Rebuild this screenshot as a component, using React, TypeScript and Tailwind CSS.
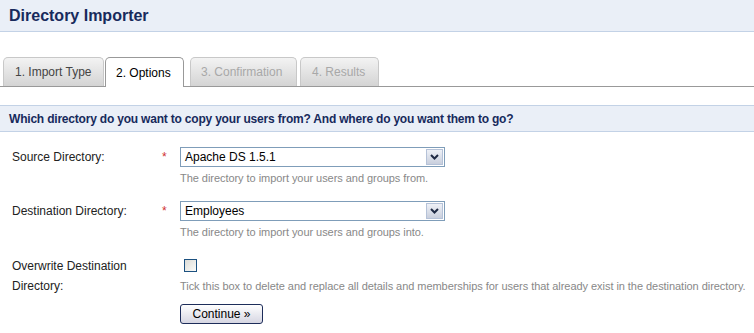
import React from "react";

const font = { fontFamily: '"Liberation Sans", Arial, sans-serif' };

function Chevron() {
  return (
    <svg width="9" height="6" viewBox="0 0 9 6">
      <path d="M1 1 L4.5 4.5 L8 1" stroke="#1f2a44" strokeWidth="2" fill="none" />
    </svg>
  );
}

function Select({ value }: { value: string }) {
  return (
    <div className="flex h-[20px] w-[265px] items-center border border-[#7f9db9] bg-white">
      <span className="flex-1 pl-[4px] text-[12px] leading-[18px] text-black">{value}</span>
      <div className="mr-[1px] flex h-[16px] w-[17px] items-center justify-center border border-[#b5c2d8] bg-gradient-to-b from-[#eef1f7] to-[#c9cfdd]">
        <Chevron />
      </div>
    </div>
  );
}

function Tab({
  label,
  className,
  state,
}: {
  label: string;
  className: string;
  state: "done" | "on" | "off";
}) {
  if (state === "on") {
    return (
      <div
        className={`relative -mb-px flex h-[30px] items-center rounded-t-[5px] border border-b-0 border-[#999999] bg-white px-[10px] text-[12px] text-black ${className}`}
      >
        {label}
      </div>
    );
  }
  return (
    <div
      className={`flex h-[29px] items-center rounded-t-[5px] border border-b-0 border-[#c8c8c8] bg-gradient-to-b from-[#f3f3f3] to-[#d4d4d4] px-[10px] text-[12px] ${
        state === "done" ? "text-[#444444]" : "text-[#a8a8a8]"
      } ${className}`}
    >
      {label}
    </div>
  );
}

export default function App() {
  return (
    <div className="w-[754px] h-[333px] overflow-hidden bg-white" style={font}>
      <div className="flex h-[32px] items-center border-b border-[#c3d2e6] bg-[#eaeff7] pl-[9px]">
        <h1 className="text-[16px] font-bold leading-[31px] text-[#172a5c]">Directory Importer</h1>
      </div>

      <div className="mt-[25px] flex items-end border-b border-[#999999] pl-[3px]">
        <Tab label="1. Import Type" state="done" className="w-[101px] pl-[11px]" />
        <Tab label="2. Options" state="on" className="ml-[1px] w-[79px]" />
        <Tab label="3. Confirmation" state="off" className="ml-[6px] w-[107px]" />
        <Tab label="4. Results" state="off" className="ml-[3px] w-[79px] pl-[11px]" />
      </div>

      <div className="mt-[18px] flex h-[27px] items-center border-y border-[#c3d2e6] bg-[#eaeff7] pl-[9px]">
        <span className="text-[12px] font-bold tracking-[-0.2px] text-[#172a5c]">
          Which directory do you want to copy your users from? And where do you want them to go?
        </span>
      </div>

      <div className="pl-[12px]">
        <div className="mt-[15px] flex">
          <div className="w-[150px] text-[12px] leading-[20px] text-[#222222]">Source Directory:</div>
          <div className="w-[18px] text-[12px] leading-[20px] text-[#d03030]">*</div>
          <div>
            <Select value="Apache DS 1.5.1" />
            <div className="mt-[5px] text-[11px] leading-[13px] tracking-[-0.05px] text-[#888888]">
              The directory to import your users and groups from.
            </div>
          </div>
        </div>

        <div className="mt-[16px] flex">
          <div className="w-[150px] text-[12px] leading-[20px] text-[#222222]">Destination Directory:</div>
          <div className="w-[18px] text-[12px] leading-[20px] text-[#d03030]">*</div>
          <div>
            <Select value="Employees" />
            <div className="mt-[5px] text-[11px] leading-[13px] tracking-[-0.05px] text-[#888888]">
              The directory to import your users and groups into.
            </div>
          </div>
        </div>

        <div className="mt-[17px] flex">
          <div className="w-[150px] text-[12px] leading-[20px] text-[#222222]">
            Overwrite Destination
            <br />
            Directory:
          </div>
          <div className="w-[18px]"></div>
          <div>
            <div className="ml-[4px] mt-[3px] h-[13px] w-[13px] border border-[#1c5180] bg-gradient-to-br from-[#dcdcd7] to-[#fbfbf8]"></div>
            <div className="mt-[8px] text-[11px] leading-[13px] tracking-[-0.05px] text-[#888888]">
              Tick this box to delete and replace all details and memberships for users that already exist in the destination directory.
            </div>
            <button className="mt-[11px] flex h-[20px] w-[83px] items-center justify-center rounded-[3px] border border-[#1d2d5a] bg-gradient-to-b from-white to-[#d6d6e2] text-[12px] text-black">
              Continue »
            </button>
          </div>
        </div>
      </div>
    </div>
  );
}
